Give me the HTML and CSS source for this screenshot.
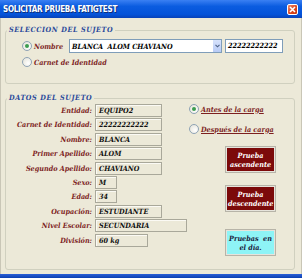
FILE: index.html
```html
<!DOCTYPE html>
<html lang="es">
<head>
    <meta charset="UTF-8">
    <title>Solicitar prueba Fatigtest</title>
    <link rel="stylesheet" href="styles.css">
</head>
<body>
    <div class="window">
        <div class="titlebar">
            <span class="title">SOLICITAR PRUEBA FATIGTEST</span>
            <span class="close">
                <svg width="7" height="7" viewBox="0 0 7 7"><path d="M1 1L6 6M6 1L1 6" stroke="#fff" stroke-width="1.6"/></svg>
            </span>
        </div>

        <div class="client">
            <fieldset class="group group-sel">
                <legend>SELECCION DEL SUJETO</legend>
                <div class="sel-row">
                    <label class="opt opt-name"><span class="radio on"></span>Nombre</label>
                    <div class="combo">
                        <span class="combo-text">BLANCA  ALOM CHAVIANO</span>
                        <span class="combo-btn">
                            <svg width="5" height="4" viewBox="0 0 5 4"><path d="M0.5 0.8L2.5 2.8L4.5 0.8" stroke="#4d6185" stroke-width="1.1" fill="none"/></svg>
                        </span>
                    </div>
                    <div class="id-field">22222222222</div>
                </div>
                <label class="opt opt-ci"><span class="radio"></span>Carnet de Identidad</label>
            </fieldset>

            <fieldset class="group group-datos">
                <legend>DATOS DEL SUJETO</legend>
                <div class="datos">
                    <span class="lbl">Entidad:</span><span class="val w67">EQUIPO2</span>
                    <span class="lbl">Carnet de Identidad:</span><span class="val w67">22222222222</span>
                    <span class="lbl">Nombre:</span><span class="val w67">BLANCA</span>
                    <span class="lbl">Primer Apellido:</span><span class="val w67">ALOM</span>
                    <span class="lbl">Segundo Apellido:</span><span class="val w67">CHAVIANO</span>
                    <span class="lbl">Sexo:</span><span class="val w22">M</span>
                    <span class="lbl">Edad:</span><span class="val w22">34</span>
                    <span class="lbl">Ocupación:</span><span class="val w67">ESTUDIANTE</span>
                    <span class="lbl">Nivel Escolar:</span><span class="val w92">SECUNDARIA</span>
                    <span class="lbl">División:</span><span class="val w53">60 kg</span>
                </div>
                <div class="side">
                    <label class="opt opt-carga"><span class="radio on"></span><u>Antes de la carga</u></label>
                    <label class="opt opt-carga second"><span class="radio"></span><u>Después de la carga</u></label>
                    <button class="btn btn-red btn-asc">Prueba ascendente</button>
                    <button class="btn btn-red btn-desc">Prueba descendente</button>
                    <button class="btn btn-cyan">Pruebas&nbsp; en el día.</button>
                </div>
            </fieldset>
        </div>
        <div class="frame-bottom"></div>
    </div>
</body>
</html>
```

FILE: styles.css
```css
* {
    box-sizing: border-box;
}
body {
    margin: 0;
    font-family: "DejaVu Serif", serif;
    font-stretch: condensed;
    background-color: #ece9d8;
}
.window {
    width: 302px;
    height: 278px;
    display: flex;
    flex-direction: column;
    background-color: #ece9d8;
    border-left: 1px solid #c9c6b6;
    border-right: 1px solid #c9c6b6;
}
.titlebar {
    height: 18px;
    display: flex;
    align-items: center;
    justify-content: space-between;
    padding: 0 3px 0 3px;
    margin: 0 -1px;
    background: linear-gradient(#3a80f3, #0b5ce0 35%, #0453d9 80%, #0842b8);
}
.title {
    color: #fff;
    font-family: "DejaVu Sans", sans-serif;
    font-stretch: condensed;
    font-weight: bold;
    font-size: 8px;
    letter-spacing: -0.3px;
    text-shadow: 1px 1px 0 #10307a;
}
.close {
    width: 11px;
    height: 11px;
    margin-right: 1px;
    border: 1px solid #fff;
    border-radius: 2px;
    background: linear-gradient(135deg, #f08a6a, #d9431d 60%, #c5380f);
    display: flex;
    align-items: center;
    justify-content: center;
}
.client {
    flex: 1;
    padding: 7px 6px 0 4px;
}
.group {
    margin: 0;
    border: 1px solid #d0d0bf;
    border-radius: 3px;
    min-width: 0;
}
.group legend {
    padding: 0 2px;
    margin-left: 1px;
    line-height: 10px;
    color: #2b4a9b;
    font-size: 7.2px;
    letter-spacing: 0.6px;
    font-weight: bold;
    font-style: italic;
}
.group-sel {
    height: 59px;
    padding: 4px 0 0 0;
}
.sel-row {
    display: flex;
    align-items: center;
    height: 14px;
    margin-left: 16px;
}
.opt {
    display: flex;
    align-items: center;
    gap: 2px;
    color: #7d1f1f;
    font-size: 7.2px;
    font-weight: bold;
    font-style: italic;
}
.opt-name {
    width: 47px;
}
.opt-ci {
    margin: 4px 0 0 16px;
    height: 10px;
}
.radio {
    width: 10px;
    height: 10px;
    border-radius: 50%;
    border: 1px solid #8fa3b5;
    background: radial-gradient(circle at 65% 65%, #fff, #e2e0d4);
    display: flex;
    align-items: center;
    justify-content: center;
    flex: none;
}
.radio.on::after {
    content: "";
    width: 4px;
    height: 4px;
    border-radius: 50%;
    background-color: #3c9c50;
}
.combo {
    width: 153px;
    height: 14px;
    display: flex;
    align-items: center;
    border: 1px solid #7f9db9;
    background-color: #fff;
}
.combo-text {
    flex: 1;
    padding-left: 2px;
    white-space: pre;
    font-size: 7.2px;
    font-weight: bold;
    font-style: italic;
}
.combo-btn {
    width: 8px;
    height: 12px;
    background: linear-gradient(#d7e2fb, #b8cbf6);
    display: flex;
    align-items: center;
    justify-content: center;
}
.id-field {
    width: 58px;
    height: 14px;
    margin-left: 3px;
    padding-left: 2px;
    border: 1px solid #7f9db9;
    background-color: #fff;
    font-size: 7.2px;
    line-height: 12px;
    font-weight: bold;
    font-style: italic;
}
.group-datos {
    height: 177px;
    margin-top: 9px;
    padding: 1px 0 0 0;
    display: flex;
}
.datos {
    width: 181px;
    display: grid;
    grid-template-columns: 86px 92px;
    grid-auto-rows: 13px;
    column-gap: 3px;
    row-gap: 1.4px;
    align-content: start;
}
.lbl {
    text-align: right;
    color: #7d1f1f;
    font-size: 7.2px;
    line-height: 13px;
    font-weight: bold;
    font-style: italic;
    white-space: nowrap;
}
.val {
    border: 1px solid #a9a89a;
    box-shadow: inset 1px 1px 0 #fbfaf4;
    padding-left: 3px;
    color: #111;
    font-size: 7.2px;
    line-height: 11px;
    font-weight: bold;
    font-style: italic;
    white-space: nowrap;
}
.w22 { width: 22px; }
.w53 { width: 53px; }
.w67 { width: 67px; }
.w92 { width: 92px; }
.side {
    flex: 1;
    display: flex;
    flex-direction: column;
    align-items: flex-start;
    padding-left: 2px;
}
.opt-carga {
    height: 10px;
    margin-top: 0;
}
.opt-carga.second {
    margin-top: 10px;
}
.opt-carga u {
    text-decoration-thickness: 1px;
    text-underline-offset: 1px;
}
.btn {
    width: 51px;
    height: 27px;
    margin-left: 36px;
    padding: 0 2px;
    border: 1px solid #b7b4a8;
    box-shadow: inset 0 0 0 1px #e6e4dc;
    font-family: "DejaVu Serif", serif;
    font-stretch: condensed;
    font-size: 7.2px;
    line-height: 9px;
    font-weight: bold;
    font-style: italic;
}
.btn-red {
    background-color: #7c0a0a;
    color: #fff;
}
.btn-asc {
    margin-top: 12px;
}
.btn-desc {
    margin-top: 12px;
}
.btn-cyan {
    margin-top: 17px;
    background-color: #8ef4f6;
    color: #1a1a3a;
}
.frame-bottom {
    height: 4px;
    margin: 0 -1px;
    background: linear-gradient(#2b5fd6, #0a3fb0);
}
```
